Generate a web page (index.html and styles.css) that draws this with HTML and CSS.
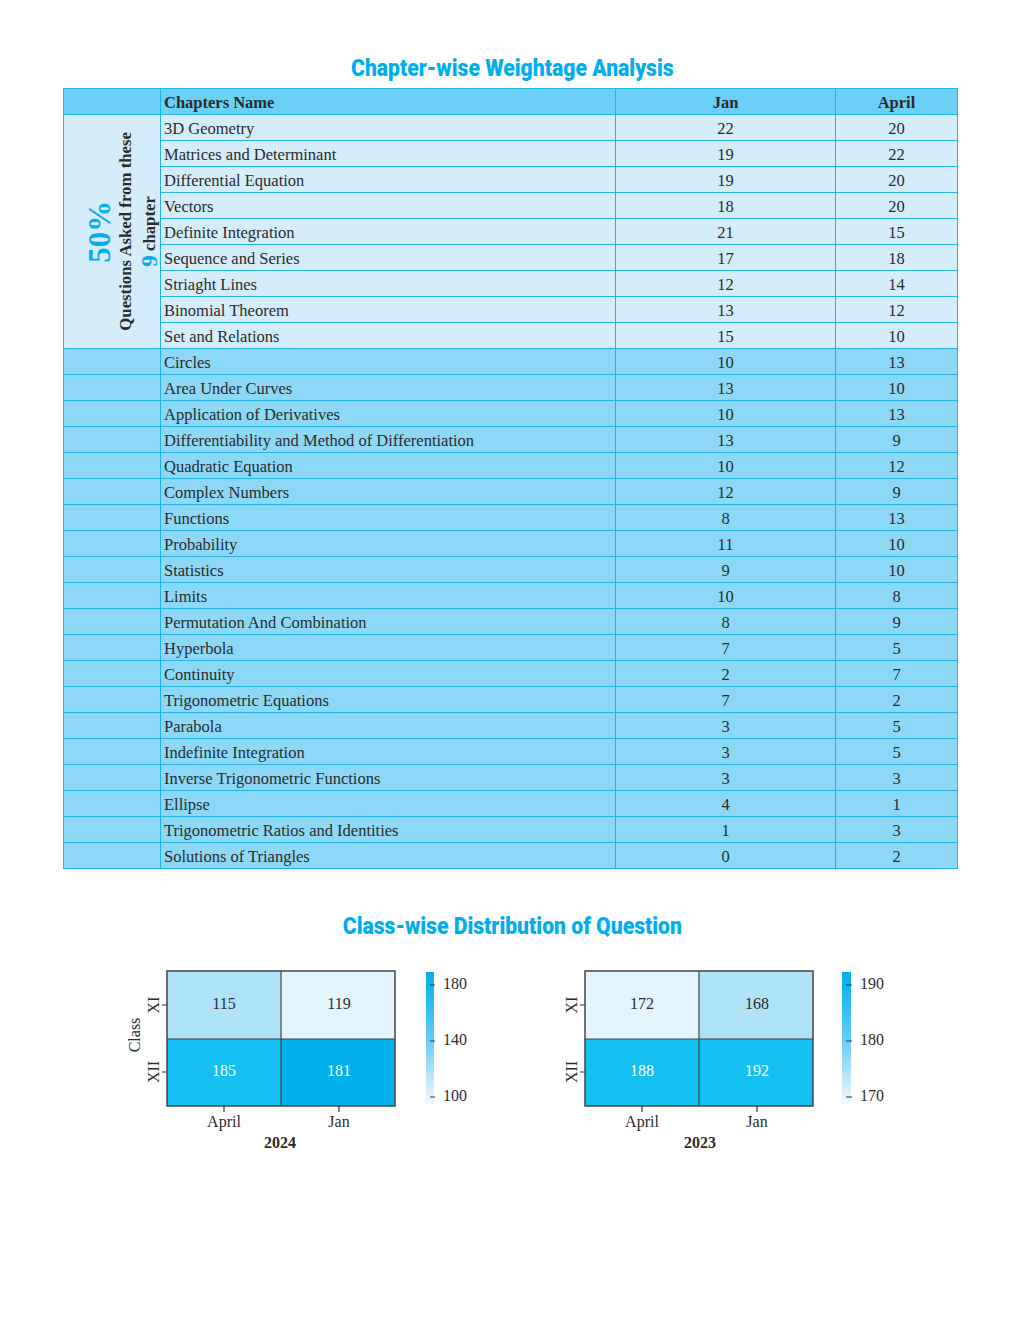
FILE: index.html
```html
<!DOCTYPE html>
<html>
<head>
  <meta charset="UTF-8">
  <title>Chapter-wise Weightage Analysis</title>
  <link rel="stylesheet" href="styles.css">
</head>
<body>

<h1 class="title"><span>Chapter-wise Weightage Analysis</span></h1>

<table class="weightage">
  <colgroup>
    <col class="c-side">
    <col class="c-name">
    <col class="c-jan">
    <col class="c-april">
  </colgroup>
  <thead>
    <tr>
      <th></th>
      <th class="name">Chapters Name</th>
      <th class="num">Jan</th>
      <th class="num">April</th>
    </tr>
  </thead>
  <tbody id="rows"></tbody>
</table>

<h1 class="title title-2"><span>Class-wise Distribution of Question</span></h1>

<div class="charts">
  <svg class="chart" width="360" height="200" viewBox="0 0 360 200">
    <defs>
      <linearGradient id="bar24" x1="0" y1="0" x2="0" y2="1">
        <stop offset="0" stop-color="#00aeef"/>
        <stop offset="0.5" stop-color="#62cbf3"/>
        <stop offset="1" stop-color="#f4fbfe"/>
      </linearGradient>
    </defs>
    <rect x="47" y="14" width="114" height="68" fill="#ade2f8"/>
    <rect x="161" y="14" width="114" height="68" fill="#e2f4fc"/>
    <rect x="47" y="82" width="114" height="67" fill="#14c0f1"/>
    <rect x="161" y="82" width="114" height="67" fill="#00b1ee"/>
    <path d="M161 14V149M47 82H275" stroke="#444" stroke-width="1.2"/>
    <rect x="47" y="14" width="228" height="135" fill="none" stroke="#444" stroke-width="1.5"/>
    <path d="M42 48H47M42 115H47M104 149V155M219 149V155" stroke="#333" stroke-width="1.2"/>
    <g class="cell-txt">
      <text x="104" y="52">115</text>
      <text x="219" y="52">119</text>
      <text x="104" y="119" class="light">185</text>
      <text x="219" y="119" class="light">181</text>
    </g>
    <text class="axis" transform="translate(39 48) rotate(-90)" text-anchor="middle">XI</text>
    <text class="axis" transform="translate(39 115) rotate(-90)" text-anchor="middle">XII</text>
    <text class="axis" transform="translate(20 78) rotate(-90)" text-anchor="middle">Class</text>
    <text class="axis mid" x="104" y="170">April</text>
    <text class="axis mid" x="219" y="170">Jan</text>
    <text class="axis mid bold" x="160" y="191">2024</text>
    <rect x="306" y="15" width="8" height="132" fill="url(#bar24)"/>
    <path d="M310 28H315M310 84H315M310 140H315" stroke="#333" stroke-width="1.2"/>
    <text class="axis" x="323" y="32">180</text>
    <text class="axis" x="323" y="88">140</text>
    <text class="axis" x="323" y="144">100</text>
  </svg>

  <svg class="chart" width="360" height="200" viewBox="0 0 360 200">
    <defs>
      <linearGradient id="bar23" x1="0" y1="0" x2="0" y2="1">
        <stop offset="0" stop-color="#00aeef"/>
        <stop offset="0.5" stop-color="#62cbf3"/>
        <stop offset="1" stop-color="#f4fbfe"/>
      </linearGradient>
    </defs>
    <rect x="47" y="14" width="114" height="68" fill="#e2f4fc"/>
    <rect x="161" y="14" width="114" height="68" fill="#ade2f8"/>
    <rect x="47" y="82" width="114" height="67" fill="#14c0f1"/>
    <rect x="161" y="82" width="114" height="67" fill="#14c0f1"/>
    <path d="M161 14V149M47 82H275" stroke="#444" stroke-width="1.2"/>
    <rect x="47" y="14" width="228" height="135" fill="none" stroke="#444" stroke-width="1.5"/>
    <path d="M42 48H47M42 115H47M104 149V155M219 149V155" stroke="#333" stroke-width="1.2"/>
    <g class="cell-txt">
      <text x="104" y="52">172</text>
      <text x="219" y="52">168</text>
      <text x="104" y="119" class="light">188</text>
      <text x="219" y="119" class="light">192</text>
    </g>
    <text class="axis" transform="translate(39 48) rotate(-90)" text-anchor="middle">XI</text>
    <text class="axis" transform="translate(39 115) rotate(-90)" text-anchor="middle">XII</text>
    <text class="axis mid" x="104" y="170">April</text>
    <text class="axis mid" x="219" y="170">Jan</text>
    <text class="axis mid bold" x="162" y="191">2023</text>
    <rect x="304" y="15" width="9" height="132" fill="url(#bar23)"/>
    <path d="M308 28H314M308 84H314M308 140H314" stroke="#333" stroke-width="1.2"/>
    <text class="axis" x="322" y="32">190</text>
    <text class="axis" x="322" y="88">180</text>
    <text class="axis" x="322" y="144">170</text>
  </svg>
</div>

<script>
const chapters = [
  ["3D Geometry", 22, 20],
  ["Matrices and Determinant", 19, 22],
  ["Differential Equation", 19, 20],
  ["Vectors", 18, 20],
  ["Definite Integration", 21, 15],
  ["Sequence and Series", 17, 18],
  ["Striaght Lines", 12, 14],
  ["Binomial Theorem", 13, 12],
  ["Set and Relations", 15, 10],
  ["Circles", 10, 13],
  ["Area Under Curves", 13, 10],
  ["Application of Derivatives", 10, 13],
  ["Differentiability and Method of Differentiation", 13, 9],
  ["Quadratic Equation", 10, 12],
  ["Complex Numbers", 12, 9],
  ["Functions", 8, 13],
  ["Probability", 11, 10],
  ["Statistics", 9, 10],
  ["Limits", 10, 8],
  ["Permutation And Combination", 8, 9],
  ["Hyperbola", 7, 5],
  ["Continuity", 2, 7],
  ["Trigonometric Equations", 7, 2],
  ["Parabola", 3, 5],
  ["Indefinite Integration", 3, 5],
  ["Inverse Trigonometric Functions", 3, 3],
  ["Ellipse", 4, 1],
  ["Trigonometric Ratios and Identities", 1, 3],
  ["Solutions of Triangles", 0, 2]
];

const tbody = document.getElementById("rows");
chapters.forEach(([name, jan, april], i) => {
  const tr = document.createElement("tr");
  tr.className = i < 9 ? "top" : "rest";
  let side = "";
  if (i === 0) {
    side = `<td class="side" rowspan="9">
      <div class="side-note">
        <span class="pct">50%</span>
        <span class="q">Questions Asked from these</span>
        <span class="q"><span class="nine">9</span> chapter</span>
      </div>
    </td>`;
  } else if (i >= 9) {
    side = `<td class="side"></td>`;
  }
  tr.innerHTML = `${side}<td class="name">${name}</td><td class="num">${jan}</td><td class="num">${april}</td>`;
  tbody.appendChild(tr);
});
</script>

</body>
</html>
```

FILE: styles.css
```css
body {
  margin: 0;
  background: #fff;
  font-family: "Liberation Serif", "Times New Roman", serif;
  color: #2b2b2b;
}

.title {
  margin: 56px 0 6px;
  text-align: center;
  font-family: "Roboto", "Liberation Sans", sans-serif;
  font-weight: 900;
  font-size: 23px;
  line-height: 26px;
  color: #00aeef;
}

.title span {
  display: inline-block;
  transform: scaleX(0.92);
}

.title-2 {
  margin-top: 45px;
  margin-bottom: 0;
}

.weightage {
  margin-left: 63px;
  width: 894px;
  table-layout: fixed;
  border-collapse: collapse;
  font-size: 16.5px;
}

.c-side { width: 97px; }
.c-name { width: 455px; }
.c-jan { width: 220px; }
.c-april { width: 122px; }

.weightage th,
.weightage td {
  border: 1px solid #22b3ec;
  height: 24px;
  padding: 1px 3px 0;
  line-height: 17px;
  white-space: nowrap;
  box-sizing: border-box;
}

.weightage tr {
  height: 26px;
}

.weightage th {
  background: #6ccff6;
  font-weight: bold;
}

.weightage .name {
  text-align: left;
}

.weightage .num {
  text-align: center;
}

tr.top td {
  background: #d5edfa;
}

tr.rest td {
  background: #8dd8f7;
}

.weightage td.side {
  padding: 0;
  overflow: visible;
}

.side-note {
  display: flex;
  flex-direction: column;
  align-items: center;
  justify-content: center;
  writing-mode: vertical-rl;
  transform: rotate(180deg);
  margin-left: 22px;
  font-weight: bold;
  line-height: 24px;
}

.pct {
  font-size: 31px;
  color: #00aeef;
  line-height: 28px;
}

.q {
  font-size: 16.8px;
}

.nine {
  font-size: 23px;
  color: #00aeef;
}

.charts {
  display: flex;
  gap: 58px;
  margin: 17px 0 0 120px;
}

.chart text {
  font-family: "Liberation Serif", "Times New Roman", serif;
  font-size: 16px;
  fill: #2b2b2b;
}

.cell-txt text {
  text-anchor: middle;
}

.chart text.light {
  fill: #fff;
}

.chart .mid {
  text-anchor: middle;
}

.chart .bold {
  font-weight: bold;
}
```
